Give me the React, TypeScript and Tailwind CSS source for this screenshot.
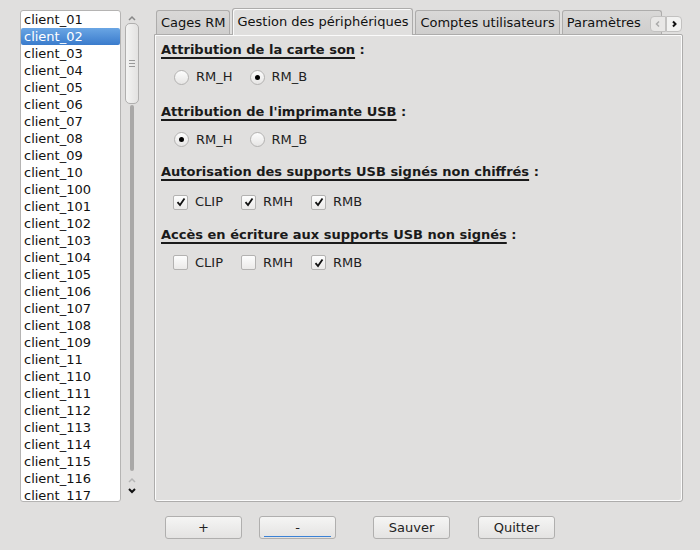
import { useState } from "react";

const clients = [
  "01", "02", "03", "04", "05", "06", "07", "08", "09", "10",
  "100", "101", "102", "103", "104", "105", "106", "107", "108", "109",
  "11", "110", "111", "112", "113", "114", "115", "116", "117",
].map((n) => "client_" + n);

const tabs = ["Cages RM", "Gestion des périphériques", "Comptes utilisateurs", "Paramètres"];

const Radio = ({ checked, label }: { checked: boolean; label: string }) => (
  <div className="flex items-center gap-[7px]">
    <div className="w-[15px] h-[15px] rounded-full border border-[#b3b2b1] bg-gradient-to-b from-[#fdfdfd] to-[#e6e5e4] flex items-center justify-center">
      {checked && <div className="w-[5px] h-[5px] rounded-full bg-black" />}
    </div>
    <span>{label}</span>
  </div>
);

const Check = ({ checked, label }: { checked: boolean; label: string }) => (
  <div className="flex items-center gap-[7px]">
    <div className="w-[15px] h-[15px] rounded-[2px] border border-[#b3b2b1] bg-gradient-to-b from-[#fdfdfd] to-[#ebeae9] flex items-center justify-center">
      {checked && (
        <svg width="10" height="10" viewBox="0 0 10 10">
          <path d="M1.5 5.2 L4 8 L8.5 1.5" fill="none" stroke="#111" strokeWidth="1.8" />
        </svg>
      )}
    </div>
    <span>{label}</span>
  </div>
);

const Heading = ({ text }: { text: string }) => (
  <div className="font-bold text-[13px] text-[#1a1a1a]">
    <span className="underline decoration-2 underline-offset-[3px]">{text}</span> :
  </div>
);

const Button = ({ label, focus }: { label: string; focus?: boolean }) => (
  <button className="relative w-[77px] h-[23px] rounded-[3px] border border-[#b0afae] bg-gradient-to-b from-[#f5f5f4] to-[#e4e3e2] text-[13px] text-[#222]">
    {label}
    {focus && <div className="absolute left-[4px] right-[4px] bottom-[1px] h-px bg-[#3b82d6]" />}
  </button>
);

export default function App() {
  const [selected] = useState("client_02");
  return (
    <div className="w-[700px] h-[550px] bg-[#e0dfde] text-[#222] text-[13px] font-['DejaVu_Sans',sans-serif] flex flex-col">
      <div className="flex pt-[10px] pl-[20px]">
        <div className="w-[101px] h-[492px] bg-white border border-[#b5b4b3] rounded-[3px] overflow-hidden">
          {clients.map((c) => (
            <div
              key={c}
              className={
                c === selected
                  ? "h-[17px] leading-[17px] pl-[3px] text-white bg-gradient-to-b from-[#6aa6e4] to-[#3a7bcc] rounded-[2px]"
                  : "h-[17px] leading-[17px] pl-[3px] text-[#111]"
              }
            >
              {c}
            </div>
          ))}
        </div>
        <div className="w-[14px] ml-[4px] flex flex-col items-center h-[492px]">
          <svg width="10" height="8" viewBox="0 0 10 8" className="mt-[4px]">
            <path d="M2 6 L5 3 L8 6" fill="none" stroke="#888" strokeWidth="1.5" />
          </svg>
          <div className="w-[14px] h-[81px] mt-[1px] rounded-[5px] border border-[#b0afae] bg-gradient-to-r from-[#f4f4f3] to-[#e3e2e1] flex flex-col items-center justify-center gap-[2px]">
            <div className="w-[6px] h-px bg-[#999]" />
            <div className="w-[6px] h-px bg-[#999]" />
            <div className="w-[6px] h-px bg-[#999]" />
          </div>
          <div className="w-[4px] h-[366px] rounded-[2px] bg-[#a9a8a7] mt-[1px]" />
          <svg width="10" height="8" viewBox="0 0 10 8" className="mt-[5px]">
            <path d="M2 6 L5 3 L8 6" fill="none" stroke="#b5b5b5" strokeWidth="1.5" />
          </svg>
          <svg width="10" height="8" viewBox="0 0 10 8" className="mt-[3px]">
            <path d="M2 2 L5 5 L8 2" fill="none" stroke="#111" strokeWidth="2" />
          </svg>
        </div>
        <div className="ml-[15px] w-[529px] flex flex-col">
          <div className="flex items-end gap-[2px] h-[24px] pl-[2px] relative z-10">
            {tabs.map((t, i) =>
              i === 1 ? (
                <div
                  key={t}
                  className="h-[27px] -mb-[1px] px-[4px] rounded-t-[3px] border border-b-0 border-[#adacab] bg-[#e0dfde] flex items-center text-[#111] shadow-[inset_1px_1px_0_#fafafa]"
                >
                  {t}
                </div>
              ) : (
                <div
                  key={t}
                  className={
                    "h-[24px] px-[4px] rounded-t-[3px] border border-b-0 border-[#adacab] bg-gradient-to-b from-[#d9d8d7] to-[#cfcecd] flex items-center text-[#111] " +
                    (i === 3 ? "w-[100px] overflow-hidden whitespace-nowrap" : "")
                  }
                >
                  {t}
                </div>
              )
            )}
            <div className="absolute right-[1px] top-[6px] flex">
              <div className="w-[16px] h-[16px] rounded-l-[4px] border border-[#c2c1c0] bg-[#e8e7e6] flex items-center justify-center">
                <svg width="8" height="8" viewBox="0 0 8 8">
                  <path d="M5 1.5 L2.5 4 L5 6.5" fill="none" stroke="#aaa" strokeWidth="1.5" />
                </svg>
              </div>
              <div className="w-[16px] h-[16px] rounded-r-[4px] border border-[#c2c1c0] bg-[#f2f2f1] flex items-center justify-center">
                <svg width="8" height="8" viewBox="0 0 8 8">
                  <path d="M3 1.5 L5.5 4 L3 6.5" fill="none" stroke="#111" strokeWidth="2" />
                </svg>
              </div>
            </div>
          </div>
          <div className="h-[468px] border border-[#adacab] rounded-b-[3px] rounded-tr-[2px] shadow-[inset_1px_1px_0_#fbfbfb,inset_-1px_-1px_0_#fbfbfb] pt-[5px] pl-[6px]">
            <Heading text="Attribution de la carte son" />
            <div className="flex gap-[17px] ml-[13px] mt-[9px] h-[17px]">
              <Radio checked={false} label="RM_H" />
              <Radio checked={true} label="RM_B" />
            </div>
            <div className="mt-[16px]">
              <Heading text="Attribution de l'imprimante USB" />
            </div>
            <div className="flex gap-[17px] ml-[13px] mt-[10px] h-[17px]">
              <Radio checked={true} label="RM_H" />
              <Radio checked={false} label="RM_B" />
            </div>
            <div className="mt-[14px]">
              <Heading text="Autorisation des supports USB signés non chiffrés" />
            </div>
            <div className="flex gap-[18px] ml-[12px] mt-[12px] h-[17px]">
              <Check checked={true} label="CLIP" />
              <Check checked={true} label="RMH" />
              <Check checked={true} label="RMB" />
            </div>
            <div className="mt-[14px]">
              <Heading text="Accès en écriture aux supports USB non signés" />
            </div>
            <div className="flex gap-[18px] ml-[12px] mt-[10px] h-[17px]">
              <Check checked={false} label="CLIP" />
              <Check checked={false} label="RMH" />
              <Check checked={true} label="RMB" />
            </div>
          </div>
        </div>
      </div>
      <div className="flex mt-[14px] pl-[165px]">
        <Button label="+" />
        <div className="ml-[17px]">
          <Button label="-" focus />
        </div>
        <div className="ml-[37px]">
          <Button label="Sauver" />
        </div>
        <div className="ml-[28px]">
          <Button label="Quitter" />
        </div>
      </div>
    </div>
  );
}
